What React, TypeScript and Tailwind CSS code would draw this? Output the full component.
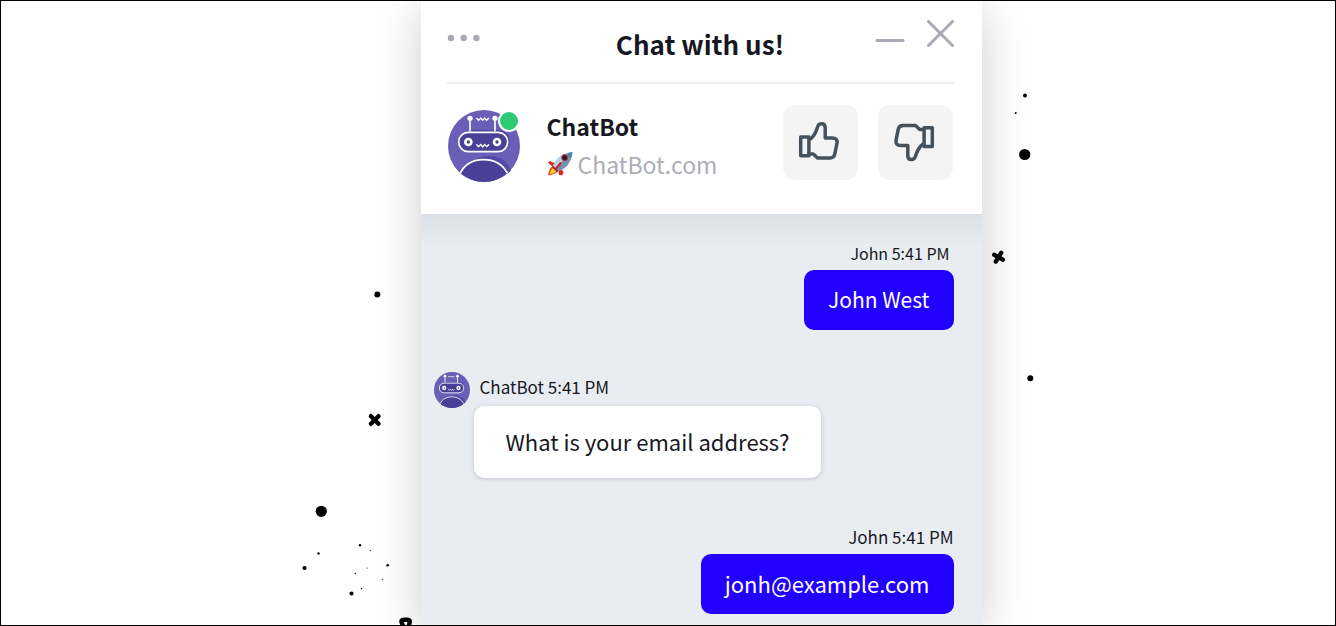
import clsx from 'clsx'

type Message = {
  id: number
  author: string
  time: string
  text: string
  bot?: boolean
  stampClass?: string
  bubbleClass?: string
}

const messages: Message[] = [
  { id: 1, author: 'John', time: '5:41 PM', text: 'John West', stampClass: 'pr-1 text-[16px]', bubbleClass: 'text-[21px]' },
  { id: 2, author: 'ChatBot', time: '5:41 PM', text: 'What is your email address?', bot: true },
  { id: 3, author: 'John', time: '5:41 PM', text: 'jonh@example.com', stampClass: 'text-[17px]', bubbleClass: 'text-[22px]' },
]

// [cx, cy, r]
const specks = [
  [1025, 95.5, 2],
  [1015.7, 113, 1],
  [1024.7, 154.5, 5.6],
  [1030.3, 378.3, 3],
  [377.3, 294.5, 3],
  [321.3, 511.3, 5.6],
  [304.5, 568, 2.1],
  [318.5, 553.5, 1.2],
  [360, 545.3, 1.2],
  [370.3, 550.5, 0.6],
  [367, 568, 0.6],
  [387.7, 565.3, 1.3],
  [355.3, 573.5, 0.7],
  [382.3, 579.3, 0.6],
  [351.5, 593.5, 2.1],
  [361.5, 588.5, 0.7],
]

function Confetti() {
  return (
    <svg
      viewBox="300 1 740 624"
      width="740"
      height="624"
      aria-hidden="true"
      className="pointer-events-none absolute top-0 -left-[121px] max-w-none"
    >
      {specks.map(([cx, cy, r]) => (
        <circle key={`${cx}-${cy}`} cx={cx} cy={cy} r={r} />
      ))}
      <g stroke="#000" strokeWidth="4.4" strokeLinecap="round" fill="none">
        <path d="M994.3 254.8 1002.8 259.6M1001.2 252.8 995.8 261.6" />
        <path d="M370.9 416.2 378.5 423.8M378.5 416.2 370.9 423.8" />
        <path d="M403.4 627 401.4 621.5Q401.4 620 404 619.8H407.5Q409.8 620 409.8 621.5L408.6 627" />
      </g>
    </svg>
  )
}

function BotAvatar({ className }: { className?: string }) {
  return (
    <svg viewBox="0 0 216 216" role="img" aria-label="ChatBot" className={clsx('shrink-0', className)}>
      <circle cx="108" cy="108" r="108" fill="#6b5eb6" />
      <path d="M62 68 70 60H156C176 60 188 78 183 104L168 122Z" fill="#5346a0" />
      <path d="M60 168C82 132 150 128 176 160 184 170 187 176 188 184L176 192Z" fill="#5649a4" />
      <path d="M37 189C50 164 76 149 107 149S164 164 178 189C160 206 134 216 108 216S56 206 37 189Z" fill="#4b4097" />
      <path d="M37 189C50 164 76 149 107 149S164 164 178 189" fill="none" stroke="#fff" strokeWidth="5" />
      <g fill="none" stroke="#fff" strokeWidth="5">
        <path d="M66 26V64M141 26V64" />
        <rect x="32" y="67" width="147" height="58" rx="29" fill="#4b4097" />
      </g>
      <g fill="#fff">
        <circle cx="66" cy="25" r="8" />
        <circle cx="141" cy="25" r="8" />
        <circle cx="61" cy="96" r="13" />
        <circle cx="147" cy="96" r="13" />
      </g>
      <circle cx="61" cy="96" r="5" fill="#4b4097" />
      <circle cx="147" cy="96" r="5" fill="#4b4097" />
      <g fill="none" stroke="#fff" strokeWidth="4" strokeLinejoin="round" strokeLinecap="round">
        <path d="M86 25 92 31 98 24 104 31 110 24 116 31 122 25" />
        <path d="M86 104 92 110 98 103 104 111 110 103 116 110 122 104" />
      </g>
    </svg>
  )
}

function Rocket() {
  return (
    <svg viewBox="0 0 78 78" width="26" height="26" role="img" aria-label="Rocket">
      <path d="M27 38 8 30 3 35 18 48Z" fill="#e02a20" />
      <path d="M42 53 50 64 46 73 36 72 34 58Z" fill="#e02a20" />
      <path d="M18 45C8 50 5 60 3 73 16 72 27 68 33 59Z" fill="#f4511e" />
      <path d="M20 50C13 54 10 62 8 69 17 67 25 65 29 58Z" fill="#ffd836" />
      <path d="M18 46C23 29 38 10 76 3 74 34 56 54 34 61Z" fill="#6f93ae" />
      <path d="M18 46C23 29 38 10 76 3 62 17 42 32 26 53Z" fill="#b5d2e4" />
      <path d="M76 3C69 4 63 6 58 8L71 22C74 16 76 10 76 3Z" fill="#4384b4" />
      <path d="M19 45 34 60 30 64 15 49Z" fill="#a51d1d" />
      <circle cx="53" cy="20" r="10" fill="#ba2b2b" />
      <circle cx="53" cy="20" r="7" fill="#211f2b" />
      <path d="M41 36 26 54" stroke="#c92424" strokeWidth="6" strokeLinecap="round" />
    </svg>
  )
}

function Thumb({ down }: { down?: boolean }) {
  return (
    <svg viewBox="0 0 44 44" width="44" height="44" fill="none" stroke="#44525e" strokeWidth="3.5" strokeLinejoin="round">
      <g transform={down ? 'rotate(180 21 20.7)' : undefined}>
        <path d="M2.7 16H10.9V34.7H2.7Z" />
        <path d="M11 18.8 13.3 17.3C17 14 18.4 10 19.8 5.5 20.5 3 22 2.8 23.6 2.8 26 2.8 27.2 4.5 27.2 7V16.9H34.5C38 16.9 39.5 19 39 22L36.8 33C36.2 36 34.8 37 32 37H19.5L15.3 33H11" />
      </g>
    </svg>
  )
}

function ChatHeader() {
  return (
    <header className="bg-white pr-7 pl-[26px]">
      <div className="grid grid-cols-[1fr_auto_1fr] items-start border-b-2 border-[#ededf0] pt-[19px] pb-3.5">
        <button type="button" aria-label="Menu" className="justify-self-start">
          <svg viewBox="0 0 34 36" width="34" height="36" fill="#a9a9b3">
            <circle cx="4" cy="18" r="3.2" />
            <circle cx="16.7" cy="18" r="3.2" />
            <circle cx="29.4" cy="18" r="3.2" />
          </svg>
        </button>
        <h1 className="text-[26px] leading-[48px] font-bold">Chat with us!</h1>
        <div className="flex items-start gap-[22px] justify-self-end">
          <button type="button" aria-label="Minimize">
            <svg viewBox="0 0 30 40" width="30" height="40" stroke="#a9a9b3" strokeWidth="3" strokeLinecap="round">
              <path d="M2 20.5H28" />
            </svg>
          </button>
          <button type="button" aria-label="Close">
            <svg viewBox="0 0 27 27" width="27" height="27" stroke="#a9a9b3" strokeWidth="3" strokeLinecap="round">
              <path d="M1.5 1.5 25.5 25.5M25.5 1.5 1.5 25.5" />
            </svg>
          </button>
        </div>
      </div>

      <div className="flex items-start pt-[21px] pr-px pb-[31px]">
        <div className="relative mt-[5px] ml-px">
          <BotAvatar className="size-[72px]" />
          <span className="absolute top-0 right-0 size-[22px] rounded-full border-2 border-white bg-[#2dca73]" />
        </div>
        <div className="mt-0.5 ml-[27px] text-[23px] leading-[38px]">
          <h2 className="font-bold">ChatBot</h2>
          <p className="flex items-center gap-[5px] text-[#adadb5]">
            <Rocket />
            ChatBot.com
          </p>
        </div>
        <div className="ml-auto flex gap-5">
          <button type="button" aria-label="Good answer" className="flex size-[75px] items-center justify-center rounded-xl bg-[#f4f4f4]">
            <Thumb />
          </button>
          <button type="button" aria-label="Bad answer" className="flex size-[75px] items-center justify-center rounded-xl bg-[#f4f4f4]">
            <Thumb down />
          </button>
        </div>
      </div>
    </header>
  )
}

function ChatMessage({ message }: { message: Message }) {
  const { author, time, text, bot, stampClass, bubbleClass } = message

  if (bot) {
    return (
      <li className="mb-1 flex items-start gap-1 pl-[13px]">
        <BotAvatar className="size-9" />
        <div>
          <p className="pb-1 pl-1.5 text-[17px] leading-[30px]">
            {author} {time}
          </p>
          <p className="rounded-[10px] bg-white px-8 pb-0.5 text-[22px] leading-[70px] shadow-[0_1px_4px_rgba(60,70,90,0.25)]">
            {text}
          </p>
        </div>
      </li>
    )
  }

  return (
    <li className="flex flex-col items-end gap-1 pr-7">
      <p className={clsx('leading-[26px]', stampClass)}>
        {author} {time}
      </p>
      <p className={clsx('rounded-[10px] bg-[#2200ff] px-6 pb-0.5 leading-[58px] text-white', bubbleClass)}>{text}</p>
    </li>
  )
}

export default function App() {
  return (
    <main className="flex min-h-screen justify-center overflow-hidden border border-black bg-white pl-[66px] font-['Noto_Sans_CJK_SC',sans-serif] text-[#17181f]">
      <div className="relative flex w-full max-w-[561px]">
        <section aria-label="Chat" className="flex w-full flex-col shadow-[0_8px_44px_rgba(0,0,0,0.2)]">
          <ChatHeader />
          <ul className="flex grow flex-col gap-[42px] bg-[linear-gradient(#dbe0e6,#e9edf2_32px)] pt-[26px] pb-2.5">
            {messages.map((message) => (
              <ChatMessage key={message.id} message={message} />
            ))}
          </ul>
        </section>
        <Confetti />
      </div>
    </main>
  )
}
